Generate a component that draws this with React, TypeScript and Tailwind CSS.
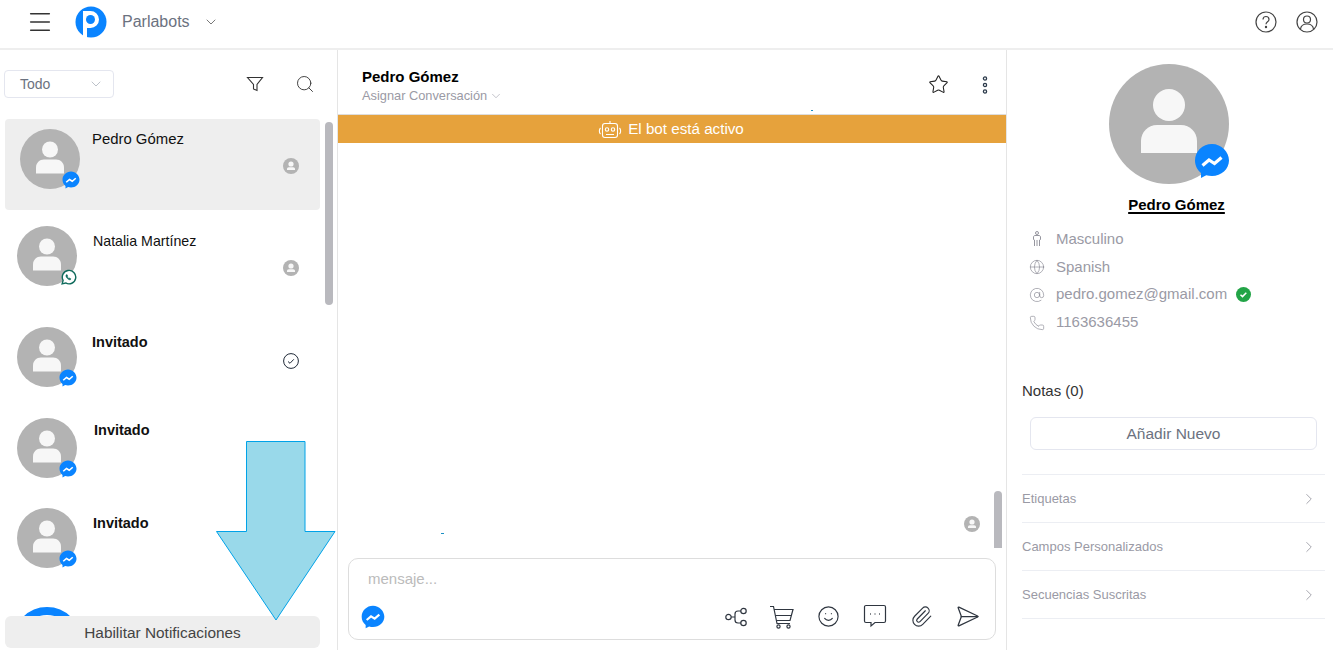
import { ChevronDown, ChevronRight, Search, Menu, Star, Globe, AtSign, Phone, Paperclip, Smile, SendHorizontal } from "lucide-react";

const Messenger = ({ size }: { size: number }) => (
  <svg width={size} height={size} viewBox="0 0 36 36">
    <path d="M18 1C8.600 1 1 8.400 1 17.500c0 5 2.300 9.400 6 12.400V35l5.200-2.800c1.800.5 3.800.8 5.800.8 9.400 0 17-7 17-15.500S27.400 1 18 1z" fill="#0a84ff" />
    <path d="M8.500 22.500l6.500-5.500 5.500 3.500 7-6" fill="none" stroke="#fff" strokeWidth="3.200" />
  </svg>
);

const WhatsApp = () => (
  <svg width="17" height="17" viewBox="0 0 24 24" fill="none" stroke="#0f6b5c" strokeWidth="2">
    <path d="M3 21l1.400-5A9.500 9.500 0 1 1 8 19.700z" fill="#fff" />
    <path d="M9 8c-1 1-.8 2.500.5 4.300 1.500 2 3.500 3.200 5 2.900l1-1.200-2-1.200-.9.700c-.9-.4-1.800-1.300-2.300-2.400l.7-.8-1-2.300z" fill="#0f6b5c" strokeWidth="0.800" />
  </svg>
);

const Person = () => (
  <svg viewBox="0 0 60 60" className="absolute inset-0 w-full h-full">
    <circle cx="30" cy="20.500" r="8" fill="#f7f7f7" />
    <path d="M16 44.500v-6c0-4.500 3.500-8 8-8h12c4.500 0 8 3.500 8 8v6z" fill="#f7f7f7" />
  </svg>
);

const Avatar = ({ size = 60, channel = "messenger" }: { size?: number; channel?: string }) => (
  <div className="relative shrink-0 rounded-full bg-[#b3b3b3]" style={{ width: size, height: size }}>
    <Person />
    <div className={size > 100 ? "absolute -right-px bottom-[5px]" : "absolute right-0 bottom-0"}>
      {channel === "messenger" ? <Messenger size={size > 100 ? 36 : 18} /> : <WhatsApp />}
    </div>
  </div>
);

const UserDot = () => (
  <svg width="16" height="16" viewBox="0 0 16 16">
    <circle cx="8" cy="8" r="8" fill="#b3b3b3" />
    <circle cx="8" cy="6" r="2.600" fill="#f7f7f7" />
    <path d="M4 12v-1c0-1 .8-1.800 1.800-1.800h4.400c1 0 1.800.8 1.800 1.800v1z" fill="#f7f7f7" />
  </svg>
);

const CheckDot = () => (
  <svg width="16" height="16" viewBox="0 0 16 16" fill="none" stroke="#1f2937" strokeWidth="1">
    <circle cx="8" cy="8" r="7.400" />
    <path d="M5 8.500l2 1.800 3.800-4" />
  </svg>
);

const Contact = ({ name, bold, channel, icon, className, nameClass, iconClass }: { name: string; bold?: boolean; channel?: string; icon?: "user" | "check"; className: string; nameClass: string; iconClass?: string }) => (
  <div className={`relative flex ${className}`}>
    <Avatar channel={channel} />
    <div className={`flex-1 leading-[18px] text-[#111] ${bold ? "font-bold text-[14.500px]" : "text-[14.200px]"} ${nameClass}`}>{name}</div>
    {icon && (
      <div className={`absolute left-[283px] ${iconClass}`}>
        {icon === "user" ? <UserDot /> : <CheckDot />}
      </div>
    )}
  </div>
);

const Section = ({ label }: { label: string }) => (
  <div className="h-12 flex items-center justify-between border-b border-[#eceef3] text-[#9a9aa5] pr-[7px]">
    <span className="text-[13px]">{label}</span>
    <ChevronRight size={18} strokeWidth={1} className="text-[#8a8a94]" />
  </div>
);

export default function App() {
  return (
    <div className="relative h-[658px] overflow-hidden bg-white font-['Liberation_Sans',Arial,sans-serif]">
      {/* TOP BAR */}
      <header className="h-[50px] flex items-center border-b-2 border-[#eeeeee] pl-[26px] pr-[15px] pb-1">
        <Menu size={28} strokeWidth={1.300} className="text-[#333]" />
        <svg width="32" height="32" viewBox="0 0 32 32" className="ml-[21px]">
          <circle cx="16" cy="16" r="15.500" fill="#0a84ff" />
          <path d="M8 5h7.500a8.500 8.500 0 0 1 0 17H12v9.500H8z" fill="#fff" />
          <circle cx="15.500" cy="13.500" r="4.500" fill="#0a84ff" />
        </svg>
        <span className="ml-[15px] text-[#6b7280] text-base">Parlabots</span>
        <ChevronDown size={16} strokeWidth={1.200} className="ml-[13px] text-[#555]" />
        <div className="ml-auto flex items-center gap-[19px] text-[#444]">
          <svg width="22" height="22" viewBox="0 0 22 22" fill="none" stroke="currentColor" strokeWidth="1.200">
            <circle cx="11" cy="11" r="10" />
            <path d="M8 8.500c0-4 6-4 6 0 0 2.300-3 2.300-3 4.700" />
            <circle cx="11" cy="16" r=".6" />
          </svg>
          <svg width="22" height="22" viewBox="0 0 22 22" fill="none" stroke="currentColor" strokeWidth="1.200">
            <circle cx="11" cy="11" r="10" />
            <circle cx="11" cy="8.500" r="3.500" />
            <path d="M4.500 18c.5-3.500 3-5 6.500-5s6 1.500 6.500 5" />
          </svg>
        </div>
      </header>

      <div className="flex h-[600px]">
        {/* CONVERSATIONS */}
        <aside className="relative w-[338px] shrink-0 border-r border-[#e5e5e5] overflow-hidden">
          <div className="h-[69px] flex items-start pt-[20px] pl-1">
            <div className="w-[110px] h-7 border border-[#e4e6ef] rounded flex items-center justify-between pl-[15px] pr-[9px] text-sm text-[#6b7280]">
              Todo
              <ChevronDown size={16} strokeWidth={1} className="text-[#9ca3af]" />
            </div>
            <svg width="18" height="18" viewBox="0 0 18 18" fill="none" stroke="#333" strokeWidth="1.100" className="ml-[132px] mt-[5px]">
              <path d="M1.500 2.500h15L11 9.500v6l-3.500-1.500V9.500z" />
            </svg>
            <Search size={20} strokeWidth={1.100} className="ml-[31px] mt-[4px] text-[#333]" />
          </div>

          <div className="relative ml-[5px] w-[315px] h-[91px] bg-[#eeeeee] rounded flex pt-[10px] pl-[15px]">
            <Avatar />
            <div className="ml-3 pt-px text-[14.900px] leading-[18px] text-[#111]">Pedro Gómez</div>
            <div className="absolute left-[278px] top-[39px]"><UserDot /></div>
          </div>

          <div className="relative">
            <Contact name="Natalia Martínez" channel="whatsapp" icon="user" iconClass="top-[50px]" className="h-[76px] pt-4 pl-[17px] mb-[41px]" nameClass="pl-4 pt-[6px]" />
            <Contact name="Invitado" bold icon="check" iconClass="top-[26px]" className="h-[60px] pl-[17px] mb-[31px]" nameClass="pl-[15px] pt-[6px]" />
            <Contact name="Invitado" bold className="h-[60px] pl-[17px] mb-[30px]" nameClass="pl-[17px] pt-[3px]" />
            <Contact name="Invitado" bold className="h-[60px] pl-[17px] mb-[39px]" nameClass="pl-4 pt-[6px]" />
            <div className="h-3 overflow-hidden">
              <div className="ml-[13px] w-[68px] h-[68px] rounded-full border-[8px] border-[#0a84ff]" />
            </div>
          </div>

          <div className="absolute left-[325px] top-[72px] w-2 h-[183px] rounded-full bg-[#b9b9be]" />
          <div className="absolute left-[5px] bottom-[2px] w-[315px] h-8 bg-[#eeeeee] rounded-md flex items-center justify-center pt-px text-[#444] text-[15.400px]">
            Habilitar Notificaciones
          </div>
        </aside>

        {/* CHAT */}
        <main className="relative flex-1 flex flex-col border-r border-[#e5e5e5]">
          <div className="h-[65px] shrink-0 flex items-start justify-between border-b border-[#dddddd] pl-6 pr-[18px] pt-[18px]">
            <div>
              <div className="text-[15px] leading-[18px] font-bold text-black">Pedro Gómez</div>
              <div className="flex items-center gap-[2px] text-[12.800px] leading-4 text-[#9a9aa5] mt-[2px]">
                Asignar Conversación
                <ChevronDown size={14} strokeWidth={1} />
              </div>
            </div>
            <div className="flex items-center gap-[33px] mt-[6px]">
              <Star size={21} strokeWidth={1.200} className="text-[#222]" />
              <svg width="6" height="18" viewBox="0 0 6 18" fill="none" stroke="#2b3a4a" strokeWidth="1.300">
                <circle cx="3" cy="2.500" r="1.600" />
                <circle cx="3" cy="9" r="1.600" />
                <circle cx="3" cy="15.500" r="1.600" />
              </svg>
            </div>
          </div>
          <div className="h-7 shrink-0 bg-[#e6a23c] flex items-center justify-center gap-[6px] pt-px pr-[2px] text-white text-[15.200px]">
            <svg width="24" height="20" viewBox="0 0 24 20" fill="none" stroke="#fff" strokeWidth="1.100">
              <rect x="4.500" y="3.500" width="15" height="14" rx="2.500" />
              <path d="M12 3.500V1M2.500 8c-1.500 1.500-1.500 4.500 0 6M21.500 8c1.500 1.500 1.500 4.500 0 6M8 14.500h8" />
              <circle cx="9" cy="9.500" r="1.700" />
              <circle cx="15" cy="9.500" r="1.700" />
            </svg>
            El bot está activo
          </div>

          <div className="relative flex-1">
            <div className="absolute right-[26px] top-[373px]"><UserDot /></div>
            <div className="absolute right-[4px] top-[348px] w-2 h-[57px] rounded-t-full bg-[#b9b9be]" />
            <div className="absolute left-[103px] top-[390px] w-[3px] h-px bg-[#1a8fc4]" />
          </div>

          <div className="absolute left-[473px] top-[60px] w-[2px] h-px bg-[#1a8fc4]" />

          <div className="mx-[10px] mb-[10px] h-[82px] shrink-0 border border-[#dddddd] rounded-[10px] flex flex-col pt-[10px] pl-[19px] pr-[15px]">
            <div className="text-[15px] leading-5 text-[#bbbbbb]">mensaje...</div>
            <div className="flex items-center mt-[15px] -ml-[7px] text-[#2f3640]">
              <Messenger size={24} />
              <svg width="23" height="22" viewBox="0 0 23 22" fill="none" stroke="currentColor" strokeWidth="1.200" className="ml-auto">
                <circle cx="3.500" cy="11" r="2.700" />
                <circle cx="18.500" cy="5" r="2.700" />
                <circle cx="18.500" cy="17" r="2.700" />
                <path d="M6.200 11H10M16 5h-3c-1.700 0-3 1.300-3 3v6c0 1.700 1.300 3 3 3h3" />
              </svg>
              <svg width="25" height="24" viewBox="0 0 25 24" fill="none" stroke="currentColor" strokeWidth="1.200" className="ml-[21px]">
                <path d="M1 1.500h3.500l3.500 17h13" />
                <path d="M5 4.500h19l-3 11H7.500M6.500 10.500h16" />
                <circle cx="9.500" cy="21.500" r="1.600" />
                <circle cx="19.500" cy="21.500" r="1.600" />
              </svg>
              <Smile size={23} strokeWidth={1.200} className="ml-[23px]" />
              <svg width="24" height="24" viewBox="0 0 24 24" fill="none" stroke="currentColor" strokeWidth="1.200" className="ml-[23px] -mt-[2px]">
                <path d="M3 1.500h18a1.500 1.500 0 0 1 1.500 1.500v14a1.500 1.500 0 0 1-1.500 1.500h-9l-4 3.500v-3.500H3A1.500 1.500 0 0 1 1.500 17V3A1.500 1.500 0 0 1 3 1.500z" />
                <path d="M7 10h.8M11.600 10h.8M16.200 10h.8" strokeWidth="1.500" />
              </svg>
              <Paperclip size={23} strokeWidth={1.200} className="ml-[23px]" />
              <SendHorizontal size={25} strokeWidth={1.200} className="ml-[22px]" />
            </div>
          </div>
        </main>

        {/* CONTACT DETAILS */}
        <aside className="w-[326px] shrink-0 pt-[14px] pl-[15px] pr-2">
          <div className="ml-[87px]">
            <Avatar size={120} />
          </div>
          <div className="text-center mt-[9px] ml-5 mr-[14px]">
            <span className="text-[15px] leading-[18px] font-bold text-black underline decoration-2 underline-offset-2">Pedro Gómez</span>
          </div>
          <div className="mt-2 text-[15px] text-[#9a9aa5] pl-[7px] flex flex-col">
            <div className="h-7 flex items-center gap-[11px]">
              <svg width="16" height="16" viewBox="0 0 16 16" fill="none" stroke="#8a8a94" strokeWidth="0.900">
                <circle cx="8" cy="2" r="1.500" />
                <path d="M5.500 15V9L4.500 8.500V6c0-1 .8-1.500 1.500-1.500h4c.7 0 1.500.5 1.500 1.500v2.500L10.500 9v6M8 9v6" />
              </svg>
              Masculino
            </div>
            <div className="h-7 flex items-center gap-[11px]">
              <Globe size={16} strokeWidth={1} className="text-[#8a8a94]" />
              Spanish
            </div>
            <div className="h-[27px] flex items-center gap-[11px]">
              <AtSign size={16} strokeWidth={1} className="text-[#8a8a94]" />
              pedro.gomez@gmail.com
              <svg width="15" height="15" viewBox="0 0 15 15" className="-ml-[2px]">
                <circle cx="7.500" cy="7.500" r="7.500" fill="#22a447" />
                <path d="M4.500 7.800l2 1.800 3.800-3.800" fill="none" stroke="#fff" strokeWidth="1.500" />
              </svg>
            </div>
            <div className="h-[29px] flex items-center gap-[11px]">
              <Phone size={16} strokeWidth={1} className="text-[#8a8a94]" />
              1163636455
            </div>
          </div>
          <div className="mt-[44px] text-[15px] leading-5 text-[#333]">Notas (0)</div>
          <div className="mt-4 ml-2 mr-2 h-[33px] border border-[#e4e6ef] rounded-md flex items-center justify-center text-[15.500px] text-[#6b7280]">
            Añadir Nuevo
          </div>
          <div className="mt-6 border-t border-[#eceef3]">
            <Section label="Etiquetas" />
            <Section label="Campos Personalizados" />
            <Section label="Secuencias Suscritas" />
          </div>
        </aside>
      </div>

      {/* annotation arrow over the sidebar */}
      <svg width="122" height="182" viewBox="0 0 122 182" className="absolute left-[215px] top-[440px]">
        <path d="M31.500 1.500h58.500v90h30L61 180 1.500 91.500h30z" fill="#99d9ea" stroke="#00a2e8" strokeWidth="1" />
      </svg>
    </div>
  );
}
